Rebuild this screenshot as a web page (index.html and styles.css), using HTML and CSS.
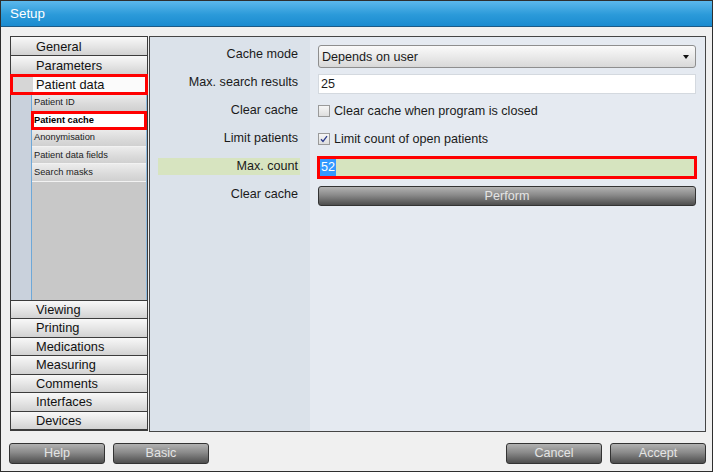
FILE: index.html
```html
<!DOCTYPE html>
<html>
<head>
<meta charset="utf-8">
<title>Setup</title>
<link rel="stylesheet" href="styles.css">
</head>
<body>
<div class="window">
  <div class="titlebar">Setup</div>
  <div class="main">
    <nav class="sidebar">
      <div class="item item-top">General</div>
      <div class="item item-top">Parameters</div>
      <div class="item item-top item-open">Patient data</div>
      <div class="subarea">
        <div class="strip"></div>
        <div class="sublist">
          <div class="sub">Patient ID</div>
          <div class="sub sub-active">Patient cache</div>
          <div class="sub">Anonymisation</div>
          <div class="sub">Patient data fields</div>
          <div class="sub">Search masks</div>
        </div>
      </div>
      <div class="item">Viewing</div>
      <div class="item">Printing</div>
      <div class="item">Medications</div>
      <div class="item">Measuring</div>
      <div class="item">Comments</div>
      <div class="item">Interfaces</div>
      <div class="item">Devices</div>
    </nav>
    <section class="panel">
      <div class="form">
        <div class="lbl">Cache mode</div>
        <div class="select ctl-a"><span>Depends on user</span><span class="arrow"></span></div>

        <div class="lbl">Max. search results</div>
        <div class="input ctl-b">25</div>

        <div class="lbl">Clear cache</div>
        <div class="check-row"><span class="box"></span><span>Clear cache when program is closed</span></div>

        <div class="lbl">Limit patients</div>
        <div class="check-row"><span class="box"><svg width="10" height="10" viewBox="0 0 10 10"><path d="M2 5.2 L4 7.4 L8 2.2" fill="none" stroke="#2a3a8a" stroke-width="1.3"/></svg></span><span>Limit count of open patients</span></div>

        <div class="lbl lbl-hl">Max. count</div>
        <div class="input input-hl"><span class="sel">52</span></div>

        <div class="lbl">Clear cache</div>
        <div class="btn btn-wide ctl-b">Perform</div>
      </div>
    </section>
  </div>
  <div class="footer">
    <div class="btn">Help</div>
    <div class="btn">Basic</div>
    <div class="spacer"></div>
    <div class="btn">Cancel</div>
    <div class="btn">Accept</div>
  </div>
</div>
</body>
</html>
```

FILE: styles.css
```css
* { box-sizing: border-box; }
html, body { margin: 0; padding: 0; }
body {
  width: 713px;
  height: 472px;
  font-family: "Liberation Sans", Arial, sans-serif;
  color: #1a1a1a;
  background: #f0f0f0;
}
.window {
  width: 713px;
  height: 472px;
  border: 1px solid #2e2e2e;
  background: #f0f0f0;
  display: flex;
  flex-direction: column;
}
.titlebar {
  height: 26px;
  flex: none;
  background: linear-gradient(#5cb8ec, #2b9ad9 55%, #1a8bd0);
  border-bottom: 1px solid #1c5a86;
  color: #ffffff;
  font-size: 13.4px;
  line-height: 25px;
  padding-left: 9px;
}
.main {
  display: flex;
  padding: 9px 6px 0 9px;
  gap: 1px;
  height: 405px;
  flex: none;
}
.sidebar {
  width: 138px;
  height: 395px;
  border: 1px solid #3c3c3c;
  display: flex;
  flex-direction: column;
  background: #c8c8c8;
}
.item {
  height: 18.5px;
  flex: none;
  border-bottom: 1px solid #3c3c3c;
  background: linear-gradient(#f8f8f8, #e6e6e6 50%, #d2d2d2);
  font-size: 12.8px;
  line-height: 17.5px;
  padding-left: 25px;
  color: #111;
}
.item-top {
  height: 19px;
  line-height: 19px;
}
.item-open {
  background: linear-gradient(to right, #d6d6d6 22px, #fbfbfb 22px);
  outline: 3px solid #ff0000;
  outline-offset: -2px;
  position: relative;
  z-index: 1;
}
.subarea {
  flex: 1;
  display: flex;
  border-bottom: 1px solid #3c3c3c;
}
.strip {
  width: 21px;
  background: #c9d1dc;
  border-right: 1px solid #6ea8d8;
}
.sublist {
  flex: 1;
  background: #c8c8c8;
  border-right: 1px solid #8cb8dc;
  padding-top: 0;
}
.sub {
  height: 17.6px;
  border-bottom: 1px solid #f2f2f2;
  background: linear-gradient(#ececec, #dadada 60%, #d0d0d0);
  font-size: 9.3px;
  line-height: 17px;
  padding-left: 2px;
  color: #222;
}
.sub-active {
  background: #ffffff;
  font-weight: bold;
  color: #000;
  outline: 3px solid #ff0000;
  outline-offset: -2px;
  position: relative;
  z-index: 1;
}
.panel {
  width: 557px;
  height: 396px;
  border: 1px solid #454545;
  background: linear-gradient(to right, #dbe2ea 160px, #e5eaf1 160px);
  padding: 5px 0 0 8px;
}
.form {
  display: grid;
  grid-template-columns: 142px 378px;
  grid-auto-rows: 28px;
  column-gap: 18px;
  font-size: 12.6px;
}
.lbl {
  align-self: start;
  margin-top: 4px;
  height: 17px;
  line-height: 17px;
  text-align: right;
  padding-right: 2px;
  color: #1a1a1a;
}
.lbl-hl {
  margin-top: 4px;
  background: #d7e4c0;
}
.ctl-a { align-self: start; margin-top: 3px; }
.ctl-b { align-self: start; margin-top: 4px; }
.select {
  height: 23px;
  border: 1px solid #8e8e8e;
  border-radius: 3px;
  background: linear-gradient(#fafafa, #eaeaea 50%, #d8d8d8);
  display: flex;
  align-items: center;
  justify-content: space-between;
  padding: 0 6px 0 3px;
}
.arrow {
  width: 0;
  height: 0;
  border-left: 3px solid transparent;
  border-right: 3px solid transparent;
  border-top: 4px solid #111;
  margin-top: 1px;
}
.input {
  height: 20px;
  background: #ffffff;
  border: 1px solid #d4d9df;
  line-height: 18px;
  padding-left: 2px;
}
.input-hl {
  align-self: start;
  margin-top: 2px;
  height: 23px;
  background: #d6e4bf;
  border: 3px solid #ff0000;
  line-height: 17px;
  padding-left: 0;
  margin-left: -1px;
  margin-right: -1px;
}
.sel {
  display: inline-block;
  background: #3399ff;
  color: #ffffff;
  padding: 0 1px;
}
.check-row {
  align-self: start;
  margin-top: 4px;
  height: 17px;
  display: flex;
  align-items: center;
  gap: 4px;
}
.box {
  width: 12px;
  height: 12px;
  border: 1px solid #9a9a9a;
  background: linear-gradient(#f6f6f6, #dedede);
  display: flex;
  align-items: center;
  justify-content: center;
}
.btn {
  width: 96px;
  height: 21px;
  border: 1px solid #333333;
  border-radius: 3px;
  background: linear-gradient(#b2b2b2, #8a8a8a 45%, #5e5e5e 85%, #4e4e4e);
  color: #e4e4e4;
  font-size: 12.6px;
  line-height: 19px;
  text-align: center;
}
.btn-wide {
  width: 378px;
  height: 20px;
  line-height: 18px;
}
.footer {
  display: flex;
  gap: 8px;
  padding: 11px 6px 0 8px;
}
.spacer { flex: 1; }
```
